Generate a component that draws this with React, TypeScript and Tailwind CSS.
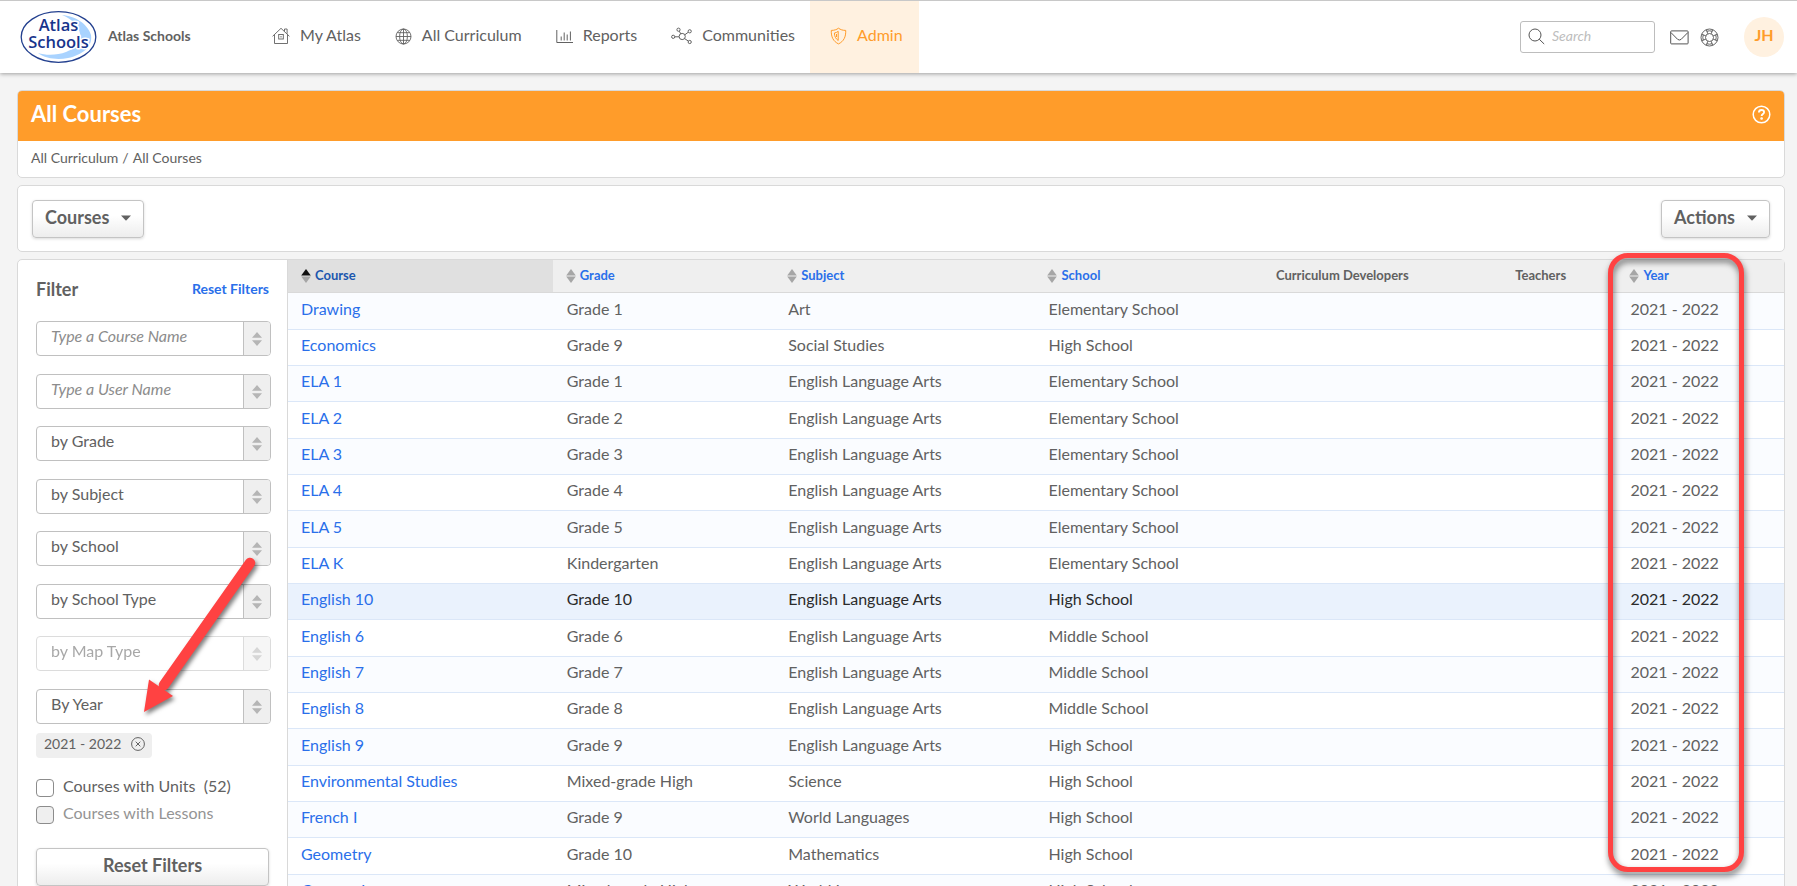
import type { ReactNode } from "react";

type Course = { name: string; grade: string; subject: string; school: string; active?: boolean };

const ELA = "English Language Arts";
const courses: Course[] = [
  { name: "Drawing", grade: "Grade 1", subject: "Art", school: "Elementary School" },
  { name: "Economics", grade: "Grade 9", subject: "Social Studies", school: "High School" },
  { name: "ELA 1", grade: "Grade 1", subject: ELA, school: "Elementary School" },
  { name: "ELA 2", grade: "Grade 2", subject: ELA, school: "Elementary School" },
  { name: "ELA 3", grade: "Grade 3", subject: ELA, school: "Elementary School" },
  { name: "ELA 4", grade: "Grade 4", subject: ELA, school: "Elementary School" },
  { name: "ELA 5", grade: "Grade 5", subject: ELA, school: "Elementary School" },
  { name: "ELA K", grade: "Kindergarten", subject: ELA, school: "Elementary School" },
  { name: "English 10", grade: "Grade 10", subject: ELA, school: "High School", active: true },
  { name: "English 6", grade: "Grade 6", subject: ELA, school: "Middle School" },
  { name: "English 7", grade: "Grade 7", subject: ELA, school: "Middle School" },
  { name: "English 8", grade: "Grade 8", subject: ELA, school: "Middle School" },
  { name: "English 9", grade: "Grade 9", subject: ELA, school: "High School" },
  { name: "Environmental Studies", grade: "Mixed-grade High", subject: "Science", school: "High School" },
  { name: "French I", grade: "Grade 9", subject: "World Languages", school: "High School" },
  { name: "Geometry", grade: "Grade 10", subject: "Mathematics", school: "High School" },
  { name: "German I", grade: "Mixed-grade High", subject: "World Languages", school: "High School" },
];

const cardClass = "rounded-[5px] border border-[#d9d9d9] bg-white";
const buttonClass =
  "flex items-center justify-center rounded-[4px] border border-[#c4c4c4] bg-linear-to-b from-white from-40% to-[#ededed] font-bold text-[18px] text-[#616161] shadow-[0_1px_3px_rgba(0,0,0,0.15)]";

function Logo() {
  return (
    <svg width="77" height="54" viewBox="0 0 77 54" role="img" aria-label="Atlas Schools logo">
      <ellipse cx="38.500" cy="27" rx="37.300" ry="25.300" fill="#fff" stroke="#23408f" strokeWidth="1.300" />
      <path d="M42 5c13 1 26 9 29 20c2 12-9 20-23 23c-10 2-22 1-30-5c9 3 20 2 28-1c7-3 14-6 15-12c0-12-8-21-19-25z" fill="#a9d3ff" />
      <text
        fontFamily="'Open Sans', 'Noto Sans', sans-serif"
        fontWeight="600"
        fontSize="16.500"
        textAnchor="middle"
        fill="#17348c"
        stroke="#fff"
        strokeWidth="3"
        strokeLinejoin="round"
        paintOrder="stroke"
      >
        <tspan x="38.500" y="21.300">Atlas</tspan>
        <tspan x="38.500" y="37.800">Schools</tspan>
      </text>
    </svg>
  );
}

function HomeIcon() {
  return (
    <svg width="18" height="18" viewBox="0 0 18 18" fill="none" stroke="currentColor" strokeWidth=".9">
      <path d="M.6 9.300 9 1.300l8.400 8M2.500 7.800v8.700h13V7.800M12.500 4.300V2h2.600v4.800" />
      <rect x="6.700" y="7.500" width="4.600" height="4.500" />
      <path d="M9 9v1.500" />
    </svg>
  );
}

function GlobeIcon() {
  return (
    <svg width="17" height="17" viewBox="0 0 17 17" fill="none" stroke="currentColor" strokeWidth=".9">
      <circle cx="8.500" cy="8.500" r="7.500" />
      <ellipse cx="8.500" cy="8.500" rx="3.900" ry="7.500" />
      <path d="M8.500 1v15M1 8.500h15M2.200 4.700h12.600M2.200 12.300h12.600" />
    </svg>
  );
}

function ReportsIcon() {
  return (
    <svg width="17" height="16" viewBox="0 0 17 16" fill="none" stroke="currentColor" strokeWidth="1">
      <path d="M.8 2v12.500H17M5.200 12.500V8.500M8.200 12.500V4.500M11.200 12.500V6.500M14.400 12.500V3.500" />
    </svg>
  );
}

function CommunitiesIcon() {
  return (
    <svg width="21" height="18" viewBox="0 0 21 18" fill="none" stroke="currentColor" strokeWidth="1">
      <circle cx="11.200" cy="9.500" r="3.100" />
      <circle cx="7.500" cy="2.700" r="1.600" />
      <circle cx="18.700" cy="4.300" r="1.600" />
      <circle cx="18.700" cy="15" r="1.600" />
      <circle cx="2.200" cy="9.800" r="1.600" />
      <path d="M8.300 4.200 9.700 6.800M13.800 7.800l3.500-2.600M13.600 11.600l3.800 2.500M3.800 9.800H8" />
    </svg>
  );
}

function ShieldIcon() {
  return (
    <svg width="17" height="18" viewBox="0 0 17 18" fill="none" stroke="currentColor" strokeWidth="1">
      <path d="M8.500 1.200c2 1.500 4.300 2.200 7.200 2.200c.3 6.500-2 11-7.200 13.500C3.300 14.400 1 9.900 1.300 3.400c2.900 0 5.200-.7 7.200-2.200z" />
      <path d="M8.200 4.300v9.200C5.600 11.700 4.500 9.300 4.400 6C5.900 5.800 7.100 5.200 8.200 4.300z" />
      <path d="M6.500 7v3" />
    </svg>
  );
}

function SortIcon({ active = false }: { active?: boolean }) {
  return (
    <svg width="10" height="14" viewBox="0 0 10 14" className="shrink-0">
      <path d="M5 0l4.800 6.400H.2z" fill={active ? "#111" : "#a6a6a6"} />
      <path d="M5 14l4.800-6.400H.2z" fill="#a6a6a6" />
    </svg>
  );
}

function Caret() {
  return (
    <svg width="10" height="6" viewBox="0 0 10 6">
      <path d="M0 .500h10L5 5.700z" fill="#616161" />
    </svg>
  );
}

function NavItem({ icon, label, active = false }: { icon: ReactNode; label: string; active?: boolean }) {
  return (
    <a
      href="#"
      className={
        active
          ? "flex items-center gap-[10px] bg-[#fff1e0] pb-[2px] pl-5 pr-4 text-[#ff9c2a]"
          : "flex items-center gap-[10px] pb-[2px] pl-[19px] pr-[15px]"
      }
    >
      {icon}
      <span className="pb-[2px]">{label}</span>
    </a>
  );
}

function Picker({ label, typed = false, disabled = false }: { label: string; typed?: boolean; disabled?: boolean }) {
  return (
    <div
      className={`flex h-[35px] overflow-hidden rounded-[4px] border border-[#c0c0c0] not-last:odd:mb-[18px] not-last:even:mb-[17px] ${
        disabled ? "opacity-55" : ""
      }`}
    >
      {typed ? (
        <input
          aria-label={label}
          placeholder={label}
          className="min-w-0 flex-1 pb-[5px] pl-[14px] text-base italic outline-none placeholder:text-[#8c8c8c]"
        />
      ) : (
        <select
          aria-label={label}
          disabled={disabled}
          className="min-w-0 flex-1 appearance-none pb-[5px] pl-[14px] text-base text-[#616161] outline-none"
        >
          <option>{label}</option>
        </select>
      )}
      <span className="flex w-[27px] shrink-0 items-center justify-center border-l border-[#c0c0c0] bg-[#efefef]">
        <svg width="10" height="14" viewBox="0 0 10 14" className="shrink-0">
          <path d="M5 0l5 5.800H0zM5 14l5-5.800H0z" fill="#b5b5b5" />
        </svg>
      </span>
    </div>
  );
}

function HeaderCell({ label, active = false }: { label: string; active?: boolean }) {
  return (
    <th scope="col" className={active ? "bg-[#e0e0e0] pl-[13px] text-[#1c57ae]" : "pl-[13px] text-[#2a6fea]"}>
      <button type="button" className="flex items-center gap-1">
        <SortIcon active={active} />
        <span className="pb-px">{label}</span>
      </button>
    </th>
  );
}

export default function App() {
  return (
    <div className="flex h-screen flex-col overflow-hidden bg-[#f4f4f4] font-['Lato','Liberation_Sans',sans-serif] text-base text-[#616161]">
      <header className="z-10 flex h-[73px] shrink-0 items-stretch border-t border-[#c8c8c8] bg-white pl-[20px] pr-[13px] shadow-[0_1px_4px_rgba(0,0,0,0.35)]">
        <div className="flex w-[233px] shrink-0 items-center gap-[11px] text-sm font-bold">
          <Logo />
          <span className="pb-[2px]">Atlas Schools</span>
        </div>
        <nav className="flex text-base">
          <NavItem icon={<HomeIcon />} label="My Atlas" />
          <NavItem icon={<GlobeIcon />} label="All Curriculum" />
          <NavItem icon={<ReportsIcon />} label="Reports" />
          <NavItem icon={<CommunitiesIcon />} label="Communities" />
          <NavItem icon={<ShieldIcon />} label="Admin" active />
        </nav>
        <div className="ml-auto flex items-center">
          <label className="flex h-8 w-[135px] items-center rounded-[3px] border border-[#bdbdbd] pl-[7px]">
            <svg width="17" height="17" viewBox="0 0 17 17" fill="none" stroke="#555" strokeWidth="1" className="mb-[2px] shrink-0">
              <circle cx="7" cy="7" r="6" />
              <path d="M11.200 11.200l5 4.800" />
            </svg>
            <input
              aria-label="Search"
              placeholder="Search"
              className="min-w-0 flex-1 pb-[2px] pl-[7px] text-sm italic outline-none placeholder:text-[#bdbdbd]"
            />
          </label>
          <a href="#" aria-label="Messages" className="ml-[15px]">
            <svg width="19" height="15" viewBox="0 0 19 15" fill="none" stroke="#555" strokeWidth="1">
              <rect x=".7" y=".9" width="17.400" height="13" rx=".8" />
              <path d="M.9 2.500l6.800 6.900q1.700 1.200 3.400 0l6.800-6.900" />
            </svg>
          </a>
          <a href="#" aria-label="Support" className="ml-[11px]">
            <svg width="19" height="19" viewBox="0 0 19 19" fill="none" stroke="#555" strokeWidth=".9">
              <circle cx="9.500" cy="9.500" r="8.500" />
              <circle cx="9.500" cy="9.500" r="4" />
              <path d="M6.300 1.700l1.500 4.100M12.700 1.700l-1.500 4.100M6.300 17.300l1.500-4.100M12.700 17.300l-1.500-4.100M1.700 6.300l4.100 1.500M1.700 12.700l4.100-1.500M17.300 6.300l-4.100 1.500M17.300 12.700l-4.100-1.500" />
              <path d="M6.800 3.300q2.700-1 5.400 0M6.800 15.700q2.700 1 5.400 0M3.300 6.800q-1 2.700 0 5.400M15.700 6.800q1 2.700 0 5.400" />
            </svg>
          </a>
          <button
            type="button"
            className="ml-[25px] flex size-10 items-center justify-center rounded-full bg-[#fff1e0] pb-[4px] text-base font-bold text-[#ff9c2a]"
          >
            JH
          </button>
        </div>
      </header>

      <main className="flex min-h-0 flex-1 flex-col gap-[7px] overflow-y-auto pl-[17px] pr-[12px] pt-[17px] [scrollbar-width:none]">
        <section className={`${cardClass} shrink-0 overflow-hidden`}>
          <div className="flex h-[50px] items-center justify-between bg-[#ff9c2a] px-[13px] pb-1 text-white">
            <h1 className="text-[22px] font-bold leading-7">All Courses</h1>
            <button type="button" aria-label="Help">
              <svg width="19" height="19" viewBox="0 0 19 19" fill="none" stroke="#fff" strokeWidth="1.500">
                <circle cx="9.500" cy="9.500" r="8.300" />
                <path d="M6.900 7.500c0-1.600 1.100-2.500 2.600-2.500s2.600.9 2.600 2.200c0 1.800-2.500 1.700-2.500 3.900" strokeWidth="1.800" />
                <circle cx="9.600" cy="13.500" r=".6" />
              </svg>
            </button>
          </div>
          <nav className="flex h-9 items-center gap-1 pb-[3px] pl-[13px] text-sm">
            <a href="#">All Curriculum</a>
            <span>/</span>
            <span>All Courses</span>
          </nav>
        </section>

        <section className={`${cardClass} flex h-[67px] shrink-0 items-center justify-between px-[14px]`}>
          <button type="button" className={`${buttonClass} h-[38px] gap-3 px-3 pb-[2px]`}>
            Courses <Caret />
          </button>
          <button type="button" className={`${buttonClass} h-[38px] gap-3 px-3 pb-[2px]`}>
            Actions <Caret />
          </button>
        </section>

        <section className={`${cardClass} relative flex shrink-0`}>
          <aside className="w-[270px] shrink-0 border-r border-[#d9d9d9] pl-[18px]">
            <div className="flex items-center justify-between pr-[18px] pt-[17px]">
              <h2 className="text-[18px] font-bold leading-6">Filter</h2>
              <a href="#" className="text-sm font-bold text-[#2a6fea]">
                Reset Filters
              </a>
            </div>
            <div className="w-[235px] pt-5">
              <Picker label="Type a Course Name" typed />
              <Picker label="Type a User Name" typed />
              <Picker label="by Grade" />
              <Picker label="by Subject" />
              <Picker label="by School" />
              <Picker label="by School Type" />
              <Picker label="by Map Type" disabled />
              <Picker label="By Year" />
            </div>
            <div className="mt-[9px] flex h-[25px] w-[116px] items-center justify-between rounded-[4px] bg-[#efefef] pb-[3px] pl-2 pr-[7px] text-sm">
              2021 - 2022
              <button type="button" aria-label="Remove 2021 - 2022">
                <svg width="14" height="14" viewBox="0 0 14 14" fill="none" stroke="#616161" strokeWidth="1">
                  <circle cx="7" cy="7" r="6.400" />
                  <path d="M4.700 4.700l4.600 4.600M9.300 4.700L4.700 9.300" />
                </svg>
              </button>
            </div>
            <div className="mt-[18px] flex flex-col">
              <label className="flex h-[27px] items-start gap-[9px] leading-5">
                <input type="checkbox" className="mt-[3px] size-[18px] appearance-none rounded-[4px] border border-[#8c8c8c] bg-white" />
                <span className="whitespace-pre">Courses with Units  (52)</span>
              </label>
              <label className="flex h-[27px] items-start gap-[9px] leading-5 text-[#949494]">
                <input type="checkbox" disabled className="mt-[3px] size-[18px] appearance-none rounded-[4px] border border-[#8c8c8c] bg-[#efefef]" />
                <span>Courses with Lessons</span>
              </label>
            </div>
            <button type="button" className={`${buttonClass} mt-[18px] mb-6 h-[38px] w-[233px] pb-[3px]`}>
              Reset Filters
            </button>
          </aside>

          <div className="min-w-0 flex-1">
            <table className="w-full table-fixed border-collapse text-left">
              <colgroup>
                <col className="w-[17.7%]" />
                <col className="w-[14.8%]" />
                <col className="w-[17.4%]" />
                <col className="w-[15.2%]" />
                <col className="w-[16%]" />
                <col className="w-[7.7%]" />
                <col />
              </colgroup>
              <thead>
                <tr className="h-[32px] border-b border-[#d9d9d9] bg-[#efefef] text-[13px]">
                  <HeaderCell label="Course" active />
                  <HeaderCell label="Grade" />
                  <HeaderCell label="Subject" />
                  <HeaderCell label="School" />
                  <th scope="col" className="pb-px pl-[14px]">Curriculum Developers</th>
                  <th scope="col" className="pb-px pl-[14px]">Teachers</th>
                  <HeaderCell label="Year" />
                </tr>
              </thead>
              <tbody>
                {courses.map((c) => (
                  <tr
                    key={c.name}
                    className={
                      c.active
                        ? "h-[36px] border-b border-[#dbe7f8] bg-[#eaf2fd] text-[#2b2b2b] nth-[3n+1]:h-[37px]"
                        : "h-[36px] border-b border-[#dbe7f8] odd:bg-[#fafcff] nth-[3n+1]:h-[37px]"
                    }
                  >
                    <td className="pb-1 pl-[13px]">
                      <a href="#" className="text-[#2a6fea]">
                        {c.name}
                      </a>
                    </td>
                    <td className="pb-1 pl-[14px]">{c.grade}</td>
                    <td className="pb-1 pl-[14px]">{c.subject}</td>
                    <td className="pb-1 pl-[14px]">{c.school}</td>
                    <td />
                    <td />
                    <td className="pb-1 pl-[14px]">2021 - 2022</td>
                  </tr>
                ))}
              </tbody>
            </table>
          </div>

          <div className="pointer-events-none absolute -top-[7px] right-[40px] h-[619px] w-[136px] rounded-[20px] border-[5px] border-[#ff4242] [filter:drop-shadow(1px_4px_3px_rgba(0,0,0,0.55))]" />
          <svg
            className="pointer-events-none absolute left-[122px] top-[296px] [filter:drop-shadow(2px_3px_2px_rgba(0,0,0,0.5))]"
            width="120"
            height="165"
            viewBox="0 0 120 165"
            fill="#ff4242"
          >
            <path d="M110 7L24 129" stroke="#ff4242" strokeWidth="10.500" strokeLinecap="round" />
            <path d="M4 156L9 123.500L33 140z" />
          </svg>
        </section>
      </main>
    </div>
  );
}
